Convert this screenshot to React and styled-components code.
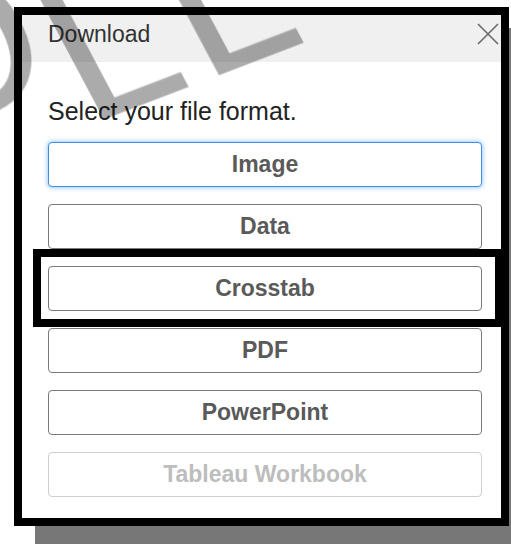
import React from 'react'
import styled, { createGlobalStyle } from 'styled-components'

const formats = [
  { label: 'Image', focused: true },
  { label: 'Data' },
  { label: 'Crosstab' },
  { label: 'PDF' },
  { label: 'PowerPoint' },
  { label: 'Tableau Workbook', disabled: true },
]

function App() {
  return (
    <Stage>
      <GlobalStyle />
      <Dialog>
        <Header>
          <Title>Download</Title>
          <Close aria-label="Close">
            <svg width="24" height="24" viewBox="0 0 24 24">
              <path d="M2 2 L22 22 M22 2 L2 22" stroke="#6a6a6a" strokeWidth="1.6" fill="none" />
            </svg>
          </Close>
        </Header>
        <Body>
          <Prompt>Select your file format.</Prompt>
          <Options>
            {formats.map((f) => (
              <Option key={f.label} $focused={f.focused} disabled={f.disabled}>
                {f.label}
              </Option>
            ))}
          </Options>
        </Body>
      </Dialog>
      <Callout />
      <Watermark>
        <Mark $lift={49} $gap={-15}>O</Mark>
        <Mark>LL</Mark>
      </Watermark>
    </Stage>
  )
}

const GlobalStyle = createGlobalStyle`
  body{
    margin:0;
    background:#fff;
    overflow:hidden;
  }
`;

const Stage = styled.div`
  position:relative;
  width:511px; height:544px;
  overflow:hidden;
  padding:7px 0 0 14px;
  box-sizing:border-box;
  font-family:'Liberation Sans', Arial, sans-serif;
`;

const Dialog = styled.div`
  width:495px; height:519px;
  box-sizing:border-box;
  border:8px solid #000;
  background:#fff;
  box-shadow:21px 21px 0 #777;
  display:flex; flex-direction:column;
`;

const Header = styled.div`
  height:47px;
  flex-shrink:0;
  background:#f0f0f0;
  display:flex; align-items:center; justify-content:space-between;
  padding:0 1px 0 26px;
`;

const Title = styled.div`
  font-size:23px;
  color:#333;
  margin-top:-9px;
`;

const Close = styled.button`
  border:none; background:none; padding:0;
  width:24px; height:24px;
  margin-top:-9px;
  svg{ display:block; }
`;

const Body = styled.div`
  padding:0 19px 0 26px;
`;

const Prompt = styled.div`
  font-size:25px;
  line-height:28px;
  color:#222;
  margin:35px 0 17px;
`;

const Options = styled.div`
  display:flex; flex-direction:column;
  gap:17px;
`;

const Option = styled.button`
  height:45px;
  width:100%;
  box-sizing:border-box;
  background:#fff;
  border:1.5px solid ${(p) => (p.$focused ? '#3d8fe0' : '#7a7a7a')};
  border-radius:4px;
  box-shadow:${(p) => (p.$focused ? '0 0 4px 1px rgba(80,160,235,0.55)' : 'none')};
  font-family:'Liberation Sans', Arial, sans-serif;
  font-size:23px;
  font-weight:bold;
  color:#5a5a5a;
  padding:0;
  &:disabled{
    border-color:#cfcfcf;
    color:#bdbdbd;
  }
`;

// black annotation frame laid over the "Crosstab" row
const Callout = styled.div`
  position:absolute;
  left:33px; top:249px;
  width:470px; height:78px;
  box-sizing:border-box;
  border:8px solid #000;
  pointer-events:none;
`;

// diagonal stamp across the top of the dialog; its origin sits on the baseline
const Watermark = styled.div`
  position:absolute;
  left:-58px; top:183px;
  transform-origin:0 0;
  transform:rotate(-21deg) skewX(7deg);
  mix-blend-mode:multiply;
  pointer-events:none;
  display:flex;
  font-family:'DejaVu Sans', sans-serif;
  font-size:200px;
  line-height:1;
  letter-spacing:12px;
  color:#ababab;
  white-space:nowrap;
`;

const Mark = styled.span`
  position:relative;
  top:${(p) => -170 - (p.$lift || 0)}px;
  margin-right:${(p) => p.$gap || 0}px;
`;

export default App
